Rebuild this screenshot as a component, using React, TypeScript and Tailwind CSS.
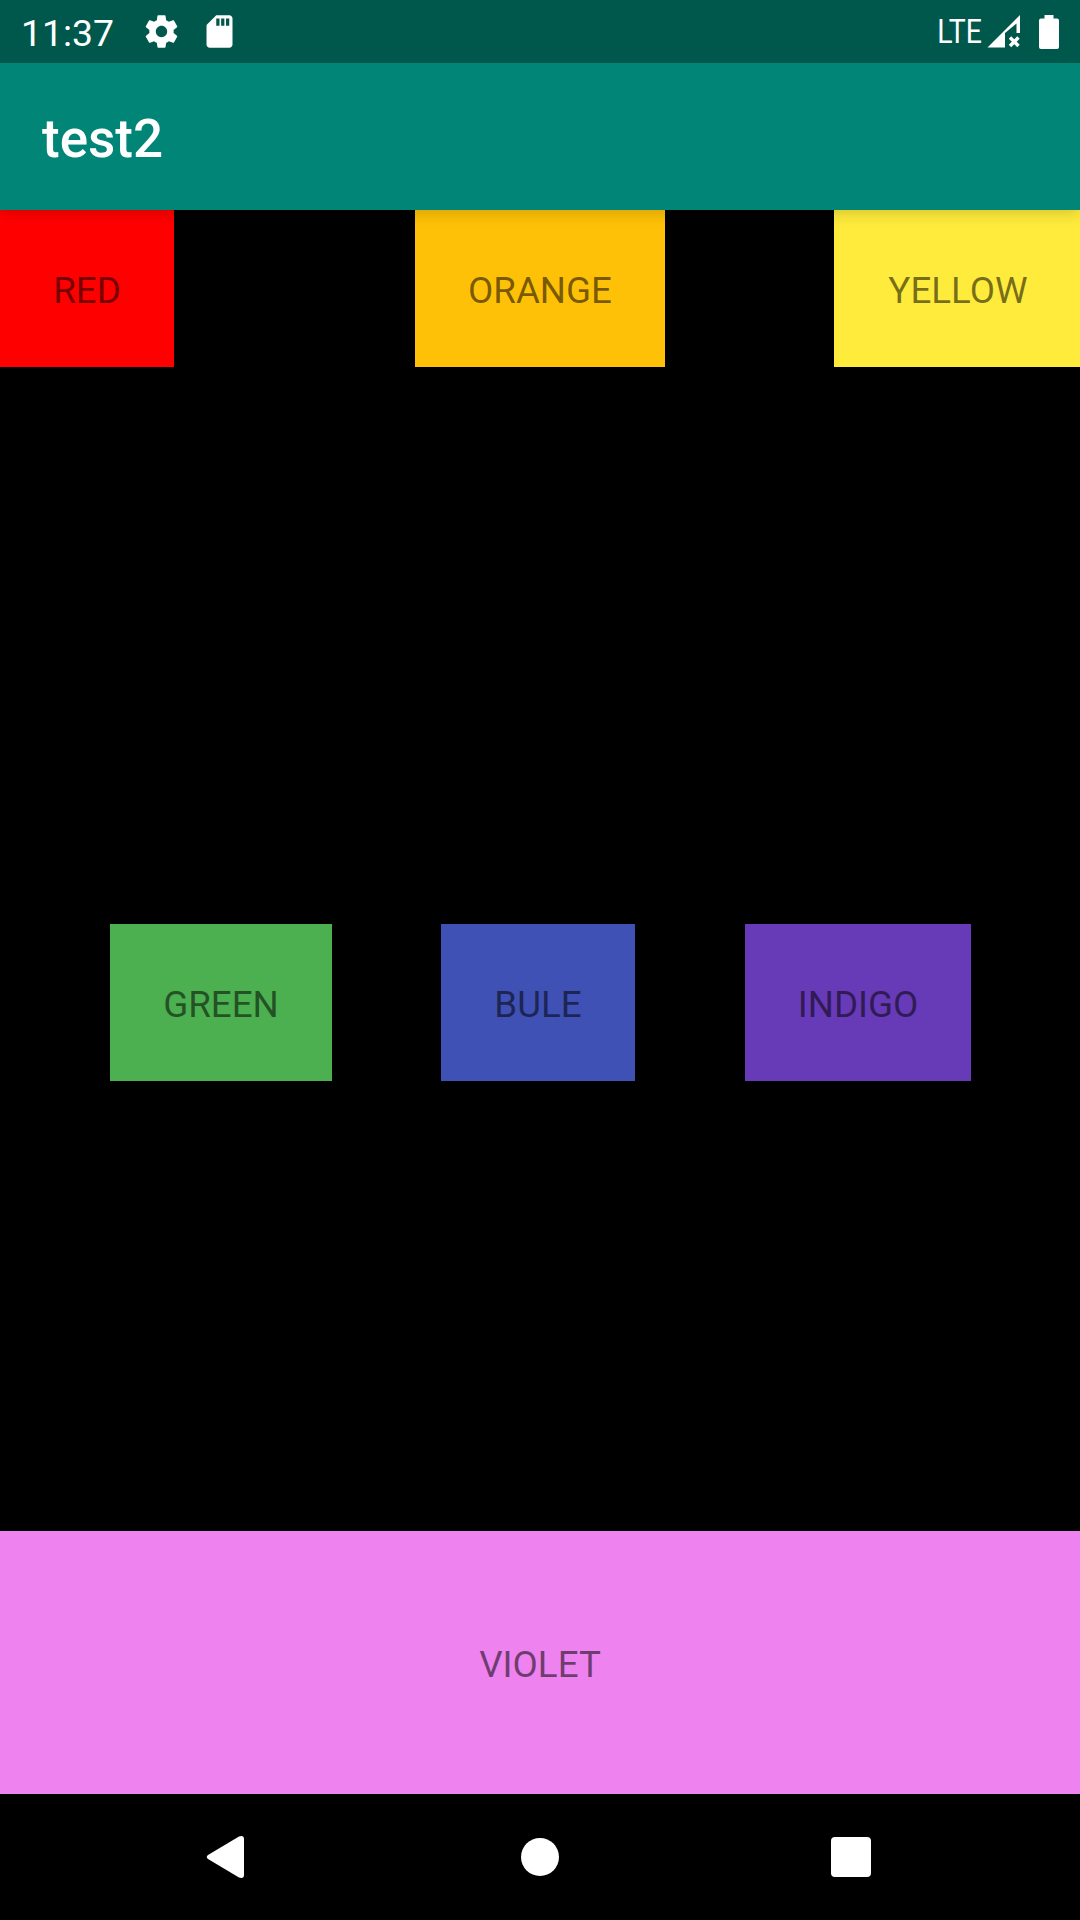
import React from "react";

function Tile({ label, className }: { label: string; className: string }) {
  return (
    <div className={`flex h-[157px] shrink-0 items-center justify-center text-[36.75px] leading-none text-black/54 ${className}`}>
      <span className="pt-[6px]">{label}</span>
    </div>
  );
}

export default function App() {
  return (
    <div className="flex h-[1920px] w-[1080px] flex-col overflow-hidden bg-black font-['Roboto',sans-serif]">
      <header className="z-20 flex h-[63px] shrink-0 items-center bg-[#00574B] text-white">
        <span className="ml-[21px] mt-[5px] w-[120.5px] text-[37.3px] leading-none">11:37</span>
        <svg className="h-[39px] w-[39px]" viewBox="0 0 24 24" fill="currentColor">
          <path d="M19.43 12.98c.04-.32.07-.64.07-.98s-.03-.66-.07-.98l2.11-1.65c.19-.15.24-.42.12-.64l-2-3.46c-.12-.22-.39-.3-.61-.22l-2.49 1c-.52-.4-1.08-.73-1.69-.98l-.38-2.65C14.46 2.18 14.25 2 14 2h-4c-.25 0-.46.18-.49.42l-.38 2.65c-.61.25-1.17.59-1.69.98l-2.49-1c-.23-.09-.49 0-.61.22l-2 3.46c-.13.22-.07.49.12.64l2.11 1.65c-.04.32-.07.65-.07.98s.03.66.07.98l-2.11 1.65c-.19.15-.24.42-.12.64l2 3.46c.12.22.39.3.61.22l2.49-1c.52.4 1.08.73 1.69.98l.38 2.65c.03.24.24.42.49.42h4c.25 0 .46-.18.49-.42l.38-2.65c.61-.25 1.17-.59 1.69-.98l2.49 1c.23.09.49 0 .61-.22l2-3.46c.12-.22.07-.49-.12-.64l-2.11-1.65zM12 15.5c-1.93 0-3.5-1.57-3.5-3.5s1.57-3.5 3.5-3.5 3.5 1.57 3.5 3.5-1.57 3.5-3.5 3.5z" />
        </svg>
        <svg className="ml-[19px] h-[39px] w-[39px]" viewBox="0 0 24 24" fill="currentColor">
          <path d="M18 2h-8L4.02 8 4 20c0 1.1.9 2 2 2h12c1.1 0 2-.9 2-2V4c0-1.1-.9-2-2-2zm-6 6.5h-2V4h2v4.5zm3 0h-2V4h2v4.5zm3 0h-2V4h2v4.5z" />
        </svg>
        <span className="ml-auto origin-right scale-x-[0.86] text-[33px] leading-none">LTE</span>
        <svg className="ml-[5px] h-[34px] w-[34px]" viewBox="0 0 34 34" fill="currentColor">
          <path d="M.5 32.5 33 0v18h-3.500V8.500L18 18v14.500Z" />
          <path d="m23 22.500 8.500 8.500m0-8.500L23 31" stroke="currentColor" strokeWidth="3.400" />
        </svg>
        <svg className="ml-[18px] mr-[21px] h-[34px] w-[20px]" viewBox="0 0 20 34" fill="currentColor">
          <path d="M5.500 0h9v3.500H18q2 0 2 2V32q0 2-2 2H2q-2 0-2-2V5.500q0-2 2-2h3.500Z" />
        </svg>
      </header>
      <div className="z-10 flex h-[147px] shrink-0 items-center bg-[#008577] pl-[42px] text-[53px] font-medium leading-none text-white shadow-[0_3px_14px_rgba(0,0,0,0.17)]">
        <span className="pt-[6px]">test2</span>
      </div>
      <main className="flex min-h-0 flex-1 flex-col">
        <div className="flex">
          <Tile label="RED" className="w-[174px] bg-[#FF0000]" />
          <Tile label="ORANGE" className="ml-[241px] w-[250px] bg-[#FFC107]" />
          <Tile label="YELLOW" className="ml-auto w-[246px] bg-[#FFEB3B] pl-[2px]" />
        </div>
        <div className="mt-[557px] flex pl-[110px]">
          <Tile label="GREEN" className="w-[222px] bg-[#4CAF50]" />
          <Tile label="BULE" className="ml-[109px] w-[194px] bg-[#3F51B5]" />
          <Tile label="INDIGO" className="ml-[110px] w-[226px] bg-[#673AB7]" />
        </div>
        <div className="mt-auto flex h-[263px] items-center justify-center bg-[#EE82EE] text-[36.75px] leading-none text-black/54">
          <span className="pt-[6px]">VIOLET</span>
        </div>
      </main>
      <nav className="flex h-[126px] shrink-0 items-center text-white">
        <svg className="ml-[206px] h-[42px] w-[38px]" viewBox="0 0 38 42" fill="currentColor">
          <path d="M2 19 33 .5Q38-1 38 3v36q0 4-5 2.500L2 23q-2.500-2 0-4Z" />
        </svg>
        <div className="ml-[277px] h-[38px] w-[38px] rounded-full bg-white" />
        <div className="ml-[272px] h-[40px] w-[40px] rounded-[4px] bg-white" />
      </nav>
    </div>
  );
}
